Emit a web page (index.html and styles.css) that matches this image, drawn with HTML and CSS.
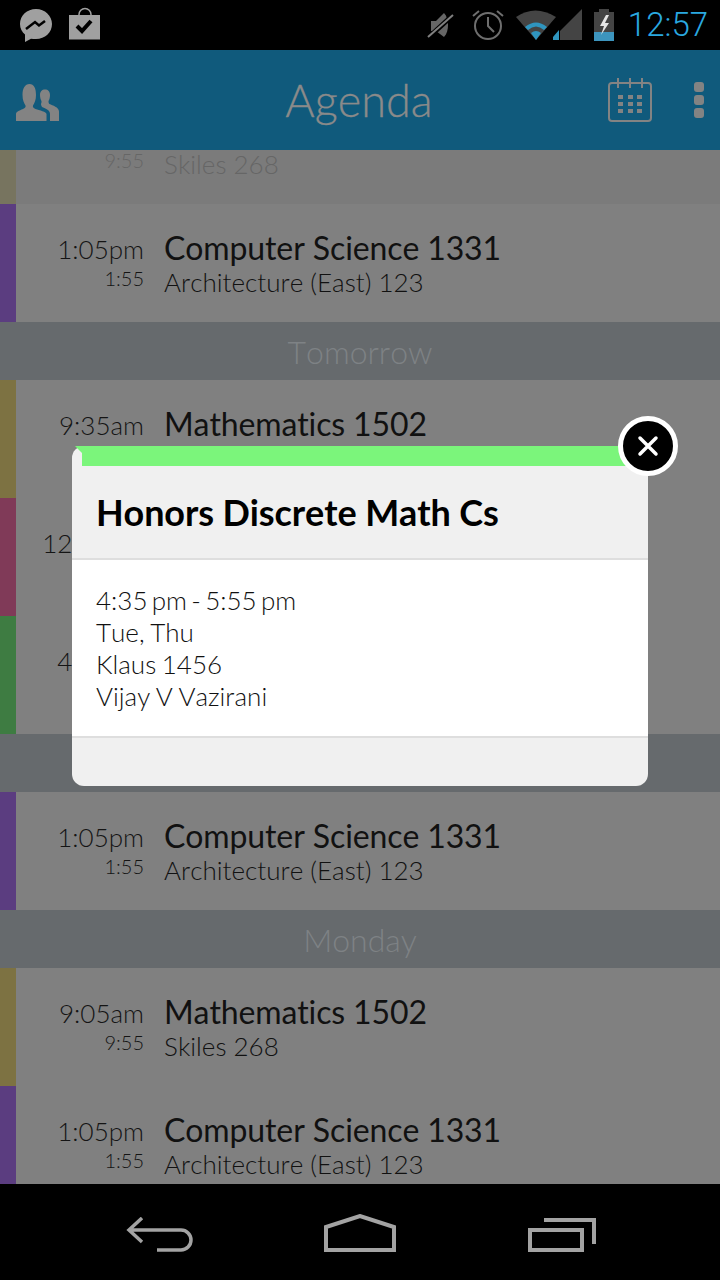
FILE: index.html
```html
<!DOCTYPE html>
<html lang="en">
<head>
<meta charset="utf-8">
<title>Agenda</title>
<link rel="stylesheet" href="styles.css">
</head>
<body>
<div class="screen">
  <header class="status">
    <div class="status-left">
      <svg class="ic" width="34" height="36" viewBox="0 0 34 36"><path fill="#a0a0a0" d="M17 3C8 3 1 9.500 1 18c0 4.400 2 8 5 10.500V36l6-3.300c1.600.3 3.300.4 5 .4 9 0 16-6.600 16-15S26 3 17 3z"/><path fill="none" stroke="#000" stroke-width="2.500" d="M7 23l9-7 4 3.500 6-4.500"/></svg>
      <svg class="ic" width="32" height="32" viewBox="0 0 32 32"><path fill="none" stroke="#a0a0a0" stroke-width="1.500" d="M10 10V6.500a6 6 0 0 1 12 0V10"/><path fill="#a0a0a0" d="M0 7h31v24.500H0z"/><path fill="none" stroke="#000" stroke-width="4" d="M8 18l5 5 9-10"/></svg>
    </div>
    <div class="status-right">
      <svg class="mute" width="28" height="30" viewBox="0 0 28 30"><path fill="#666" d="M4 11h5l8-8c3 3 4 8 4 12s-1 9-4 12l-8-6H4z"/><path stroke="#000" stroke-width="5" d="M2 27L26 5"/><path stroke="#808080" stroke-width="2" d="M1 27L26 5"/></svg>
      <svg width="32" height="32" viewBox="0 0 32 32"><circle cx="16" cy="17" r="13" fill="none" stroke="#6e6e6e" stroke-width="2"/><path fill="none" stroke="#6e6e6e" stroke-width="2" d="M16 8v9l6 6M1 7l6-5M25 2l6 5"/></svg>
      <svg class="signal" width="66" height="32" viewBox="0 0 66 32"><path fill="#444" d="M0 8Q19-5 40 8L20 31z"/><path fill="#2f95bf" d="M9 18Q20 9 31 18l-3 3Q20 14 12 21zM15 24q5-4 10 0l-5 7z"/><path fill="#444" d="M66 0v31H44V22z"/><path fill="#2f95bf" d="M37 31v-3l6-7v10z"/></svg>
      <svg width="20" height="32" viewBox="0 0 20 32"><path fill="#444" d="M0 3h5V0h10v3h5v29H0z"/><path fill="#3d95be" d="M0 23h20v9H0z"/><path fill="#e6e6e6" d="M12 6l-6 11h4l-3 9 8-12h-4l4-8z"/></svg>
      <span class="clock">12:57</span>
    </div>
  </header>

  <nav class="appbar">
    <svg class="people" width="44" height="40" viewBox="0 0 44 40"><path fill="#838383" d="M0 40v-7c0-2 3-3.500 7-5 2-1 3-2 2.500-3.500C8 22 6.500 19 6.500 14 6.500 7 9 3 13.500 3S20 7 20 14c0 5-1.500 8-3 10.500-.5 1.500.5 2.500 2.500 3.500 4 1.500 11 2.500 11 5v7z"/><path fill="#838383" d="M34 40v-7c0-3.300-3-5-8-7-.7-1.500-1-2-1-3 .5-1 .5-2 .5-3-1-1.500-1.500-4-1.500-6 0-3.500 2-5.500 5-5.500s5 2 5 5.500c0 2-.5 4.500-1.500 6 0 1 .2 2.500 1 3 3 1.500 9.500 3 9.500 7.500V40z"/></svg>
    <h1 class="title">Agenda</h1>
    <svg class="cal" width="44" height="44" viewBox="0 0 44 44"><rect x="1" y="5" width="42" height="38" rx="3" fill="none" stroke="#838383" stroke-width="2"/><path stroke="#838383" stroke-width="2" d="M10 0v10M22 0v10M34 0v10"/><path fill="#838383" d="M10 17h5v4h-5zM20 17h5v4h-5zM29 17h5v4h-5zM10 24h5v4h-5zM20 24h5v4h-5zM29 24h5v4h-5zM10 31h5v4h-5zM20 31h5v4h-5zM29 31h5v4h-5z"/></svg>
    <div class="dots"><i></i><i></i><i></i></div>
  </nav>

  <main class="viewport">
    <div class="list">
      <article class="row past"><div class="bar tan"></div><div class="times"><span class="start">8:05am</span><span class="dur">9:55</span></div><div class="info"><span class="course">Mathematics 1502</span><span class="place">Skiles 268</span></div></article>
      <article class="row"><div class="bar purple"></div><div class="times"><span class="start">1:05pm</span><span class="dur">1:55</span></div><div class="info"><span class="course">Computer Science 1331</span><span class="place">Architecture (East) 123</span></div></article>
      <h2 class="day">Tomorrow</h2>
      <article class="row"><div class="bar olive"></div><div class="times"><span class="start">9:35am</span><span class="dur">10:25</span></div><div class="info"><span class="course">Mathematics 1502</span><span class="place">Skiles 268</span></div></article>
      <article class="row"><div class="bar rose"></div><div class="times"><span class="start">12:05pm</span><span class="dur">12:55</span></div><div class="info"></div></article>
      <article class="row"><div class="bar green"></div><div class="times"><span class="start">4:35pm</span><span class="dur">5:55</span></div><div class="info"></div></article>
      <h2 class="day">Sunday</h2>
      <article class="row"><div class="bar purple"></div><div class="times"><span class="start">1:05pm</span><span class="dur">1:55</span></div><div class="info"><span class="course">Computer Science 1331</span><span class="place">Architecture (East) 123</span></div></article>
      <h2 class="day">Monday</h2>
      <article class="row"><div class="bar olive"></div><div class="times"><span class="start">9:05am</span><span class="dur">9:55</span></div><div class="info"><span class="course">Mathematics 1502</span><span class="place">Skiles 268</span></div></article>
      <article class="row"><div class="bar purple"></div><div class="times"><span class="start">1:05pm</span><span class="dur">1:55</span></div><div class="info"><span class="course">Computer Science 1331</span><span class="place">Architecture (East) 123</span></div></article>
    </div>
  </main>

  <footer class="navbar">
    <svg class="nav-low" width="68" height="36" viewBox="0 0 68 36"><path fill="none" stroke="#a3a3a3" stroke-width="3.500" d="M16 1L3 13l13 12M3 13h52a10 10 0 0 1 0 20H31"/></svg>
    <svg class="nav-home" width="72" height="38" viewBox="0 0 72 38"><path fill="none" stroke="#a3a3a3" stroke-width="4" d="M2 36V13L36 2l34 11v23z"/></svg>
    <svg class="nav-low" width="68" height="34" viewBox="0 0 68 34"><path fill="none" stroke="#a3a3a3" stroke-width="4" d="M2 12h52v20H2zM16 2h50v24"/></svg>
  </footer>

  <section class="modal">
    <div class="modal-strip"></div>
    <h3 class="modal-title">Honors Discrete Math Cs</h3>
    <div class="modal-body">
      <p class="modal-time">4:35 pm - 5:55 pm</p>
      <p>Tue, Thu</p>
      <p>Klaus 1456</p>
      <p>Vijay V Vazirani</p>
    </div>
    <div class="modal-foot"></div>
    <div class="close"><svg width="22" height="22" viewBox="0 0 22 22"><path stroke="#fff" stroke-width="3.500" stroke-linecap="round" d="M3 3l16 16M19 3L3 19"/></svg></div>
  </section>
</div>
</body>
</html>
```

FILE: styles.css
```css
* { box-sizing: border-box; }
html, body { margin: 0; padding: 0; }
body { width: 720px; height: 1280px; overflow: hidden; background: #000; font-family: Lato, "Liberation Sans", sans-serif; font-kerning: none; }
.screen { position: relative; width: 720px; height: 1280px; display: flex; flex-direction: column; overflow: hidden; }

.status { height: 50px; flex: none; background: #000; display: flex; justify-content: space-between; align-items: center; padding: 0 12px 0 19px; }
.status-left { display: flex; align-items: center; gap: 16px; margin-top: -2px; }
.status-left svg { overflow: visible; }
.status-right { display: flex; align-items: center; gap: 12px; }
.mute { margin-right: 5px; }
.clock { font-family: Roboto, sans-serif; font-size: 33px; font-weight: 300; color: #2aa9e0; line-height: 50px; margin-left: 2px; }

.appbar { height: 100px; flex: none; background: #105a7c; display: flex; align-items: center; padding: 0 16px; }
.people { flex: none; margin-top: 2px; }
.title { flex: 1; margin: 0; text-align: center; font-size: 45px; font-weight: 300; color: #8a8a8a; line-height: 100px; padding-left: 50px; -webkit-text-stroke: 0.3px #8a8a8a; }
.cal { flex: none; margin-right: 42px; }
.dots { flex: none; width: 10px; display: flex; flex-direction: column; gap: 3px; }
.dots i { display: block; width: 10px; height: 10px; border-radius: 3px; background: #838383; }

.viewport { flex: 1; min-height: 0; overflow: hidden; background: #808080; }
.list { margin-top: -64px; }
.row { height: 118px; display: flex; background: #808080; }
.row.past { background: #7b7b7b; }
.row.past .times, .row.past .info { color: #666; }
.bar { width: 16px; flex: none; }
.tan { background: #77745f; }
.olive { background: #7d7242; }
.purple { background: #5b3d80; }
.rose { background: #803a58; }
.green { background: #3e7c42; }
.times { width: 128px; flex: none; display: flex; flex-direction: column; align-items: flex-end; padding-top: 29px; color: #141414; font-weight: 300; }
.start { font-size: 26px; line-height: 33px; white-space: nowrap; }
.dur { font-size: 20px; line-height: 24px; }
.info { display: flex; flex-direction: column; padding: 25px 0 0 20px; color: #111; }
.course { font-size: 32px; line-height: 38px; font-weight: 400; white-space: nowrap; letter-spacing: -0.12px; }
.place { font-size: 26px; line-height: 30px; font-weight: 300; }
.day { height: 58px; margin: 0; background: #666a6d; color: #7e8285; font-size: 32px; font-weight: 300; line-height: 60px; text-align: center; }

.navbar { height: 96px; flex: none; background: #000; display: flex; justify-content: space-between; align-items: center; padding: 0 124px 0 126px; z-index: 1; }
.nav-low { margin-top: 6px; }
.nav-home { margin: 2px 0 0 -2px; }

.modal { position: absolute; left: 72px; top: 446px; width: 576px; height: 340px; background: #f0f0f0; border-radius: 12px; display: flex; flex-direction: column; z-index: 2; }
.modal-strip { position: relative; height: 20px; flex: none; margin-left: 10px; background: #7bf57b; }
.modal-strip::before { content: ""; position: absolute; left: -7px; top: 0; width: 7px; height: 7px; background: #7bf57b; clip-path: polygon(0 0, 100% 0, 100% 100%); }
.modal-title { height: 94px; flex: none; margin: 0; padding-left: 24px; font-size: 36px; font-weight: 700; line-height: 92px; color: #000; border-bottom: 2px solid #dedede; letter-spacing: -0.12px; }
.modal-body { height: 178px; flex: none; background: #fff; padding: 24px 24px 0; color: #111; font-size: 26px; font-weight: 300; line-height: 32px; border-bottom: 2px solid #dedede; word-spacing: -1.5px; }
.modal-body p { margin: 0; }
.modal-body .modal-time { word-spacing: -2.8px; }
.modal-foot { flex: 1; }
.close { position: absolute; right: -30px; top: -30px; width: 60px; height: 60px; border-radius: 50%; background: #000; border: 5px solid #fff; display: flex; align-items: center; justify-content: center; }
```
